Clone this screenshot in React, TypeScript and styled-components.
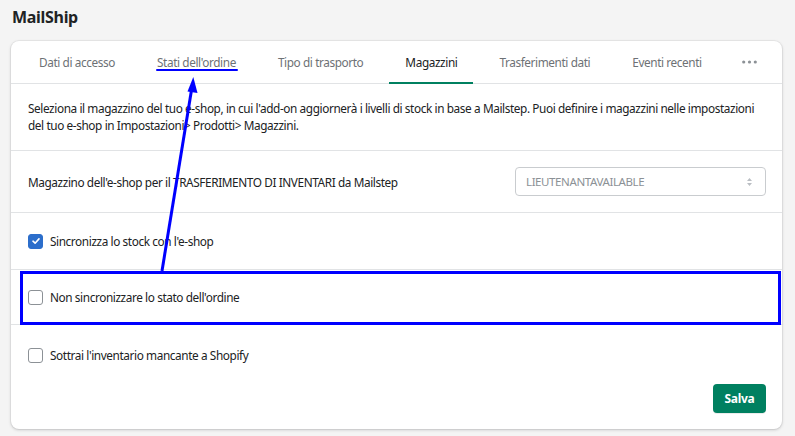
import styled, { createGlobalStyle } from 'styled-components'

const GlobalStyle = createGlobalStyle`
  body {
    margin: 0;
    background: #f4f4f4;
    font-family: 'Segoe UI', 'Noto Sans', 'Open Sans', sans-serif;
    letter-spacing: -0.4px;
    color: #202223;
  }
`

const tabs = [
  'Dati di accesso',
  "Stati dell'ordine",
  'Tipo di trasporto',
  'Magazzini',
  'Trasferimenti dati',
  'Eventi recenti',
]

const Check = () => (
  <svg width="10" height="10" viewBox="0 0 10 10">
    <path d="M2 5.2 L4.1 7.2 L8 2.9" stroke="#fff" strokeWidth="1.6" fill="none" strokeLinecap="round" strokeLinejoin="round" />
  </svg>
)

const App = () => {
  return (
    <Page>
      <GlobalStyle />
      <Title>MailShip</Title>

      <Card>
        <TabList>
          {tabs.map((t, i) => (
            <Tab key={t} $active={i === 3}>
              {t}
              {i === 1 && <MarkLine />}
            </Tab>
          ))}
          <More>
            <svg width="15" height="4" viewBox="0 0 15 4">
              <circle cx="1.7" cy="2" r="1.6" fill="#8c9196" />
              <circle cx="7.5" cy="2" r="1.6" fill="#8c9196" />
              <circle cx="13.3" cy="2" r="1.6" fill="#8c9196" />
            </svg>
          </More>
        </TabList>

        <Section $height={67}>
          <Paragraph>
            Seleziona il magazzino del tuo e-shop, in cui l'add-on aggiornerà i livelli di stock in base a Mailstep. Puoi definire i magazzini nelle impostazioni del tuo e-shop in Impostazioni&gt; Prodotti&gt; Magazzini.
          </Paragraph>
        </Section>

        <Section $height={62}>
          <Row>
            <Label>Magazzino dell'e-shop per il TRASFERIMENTO DI INVENTARI da Mailstep</Label>
            <Select>
              LIEUTENANTAVAILABLE
              <svg width="7" height="10" viewBox="0 0 7 10">
                <path d="M3.5 1 L6 4 H1 Z M3.5 9 L6 6 H1 Z" fill="#babec3" />
              </svg>
            </Select>
          </Row>
        </Section>

        <Section $height={57}>
          <CheckRow>
            <Box $checked><Check /></Box>
            Sincronizza lo stock con l'e-shop
          </CheckRow>
        </Section>

        <Section $height={55}>
          <CheckRow>
            <Box />
            Non sincronizzare lo stato dell'ordine
          </CheckRow>
          <Highlight />
        </Section>

        <Footer>
          <CheckRow>
            <Box />
            Sottrai l'inventario mancante a Shopify
          </CheckRow>
          <SaveButton>Salva</SaveButton>
        </Footer>
      </Card>

      <Arrow width="795" height="436" viewBox="0 0 795 436">
        <line x1="162" y1="271" x2="191.5" y2="90" stroke="#0000ff" strokeWidth="3" />
        <path d="M193.3 77 L197.5 93 L187.5 91.5 Z" fill="#0000ff" />
      </Arrow>
    </Page>
  )
}

const Page = styled.div`
  position: relative;
  width: 795px;
  height: 436px;
  padding: 6px 13px 0 11px;
  box-sizing: border-box;
  overflow: hidden;
`

const Title = styled.div`
  font-size: 16px;
  font-weight: 700;
  line-height: 22px;
  padding-left: 1px;
  letter-spacing: -0.3px;
  color: #202223;
`

const Card = styled.div`
  margin-top: 13px;
  width: 771px;
  height: 388px;
  background: #fff;
  border-radius: 8px;
  box-shadow: 0 0 0 1px rgba(63, 63, 68, 0.05), 0 1px 3px rgba(63, 63, 68, 0.25);
  display: flex;
  flex-direction: column;
  overflow: hidden;
`

const TabList = styled.div`
  display: flex;
  align-items: stretch;
  height: 43px;
  padding-left: 12px;
  border-bottom: 1px solid #e1e3e5;
  box-sizing: border-box;
`

const Tab = styled.div<{ $active?: boolean }>`
  position: relative;
  display: flex;
  align-items: center;
  padding: 0 16px;
  margin-right: 10px;
  font-size: 11.8px;
  color: ${p => (p.$active ? '#202223' : '#6d7175')};
  border-bottom: 2px solid ${p => (p.$active ? '#008060' : 'transparent')};
  margin-bottom: -1px;
  white-space: nowrap;
`

const MarkLine = styled.span`
  position: absolute;
  left: 15px;
  right: 14px;
  top: 28px;
  height: 2px;
  background: #0000ff;
  border-radius: 1px;
`

const More = styled.div`
  display: flex;
  align-items: center;
  padding: 0 14px;
`

const Section = styled.div<{ $height: number }>`
  position: relative;
  height: ${p => p.$height}px;
  box-sizing: border-box;
  border-bottom: 1px solid #e1e3e5;
  padding: 0 16px 0 17px;
  display: flex;
  align-items: center;
`

const Paragraph = styled.p`
  margin: 0;
  font-size: 11.8px;
  line-height: 17px;
  color: #202223;
`

const Row = styled.div`
  flex: 1;
  display: flex;
  align-items: center;
  justify-content: space-between;
`

const Label = styled.span`
  font-size: 11.8px;
`

const Select = styled.div`
  width: 251px;
  height: 29px;
  box-sizing: border-box;
  border: 1px solid #c9cccf;
  border-radius: 4px;
  padding: 0 12px 0 10px;
  display: flex;
  align-items: center;
  justify-content: space-between;
  font-size: 11.5px;
  color: #8c9196;
`

const CheckRow = styled.label`
  display: flex;
  align-items: center;
  gap: 7px;
  font-size: 11.8px;
  color: #202223;
`

const Box = styled.span<{ $checked?: boolean }>`
  width: 15px;
  height: 15px;
  box-sizing: border-box;
  border-radius: 3px;
  display: flex;
  align-items: center;
  justify-content: center;
  background: ${p => (p.$checked ? '#2c6ecb' : '#fff')};
  border: 1px solid ${p => (p.$checked ? '#2c6ecb' : '#8c9196')};
`

const Highlight = styled.div`
  position: absolute;
  left: 9px;
  right: 1px;
  top: 1px;
  bottom: -1px;
  border: 3px solid #0000ff;
  box-sizing: border-box;
  pointer-events: none;
`

const Footer = styled.div`
  flex: 1;
  display: flex;
  flex-direction: column;
  justify-content: space-between;
  align-items: flex-start;
  padding: 22px 16px 16px 17px;
`

const SaveButton = styled.button`
  align-self: flex-end;
  width: 53px;
  height: 29px;
  border: none;
  border-radius: 4px;
  background: #008060;
  color: #fff;
  font-family: inherit;
  font-size: 12px;
  font-weight: 700;
  letter-spacing: -0.3px;
  box-shadow: 0 1px 0 rgba(0, 0, 0, 0.08);
`

const Arrow = styled.svg`
  position: absolute;
  left: 0;
  top: 0;
  pointer-events: none;
`

export default App
